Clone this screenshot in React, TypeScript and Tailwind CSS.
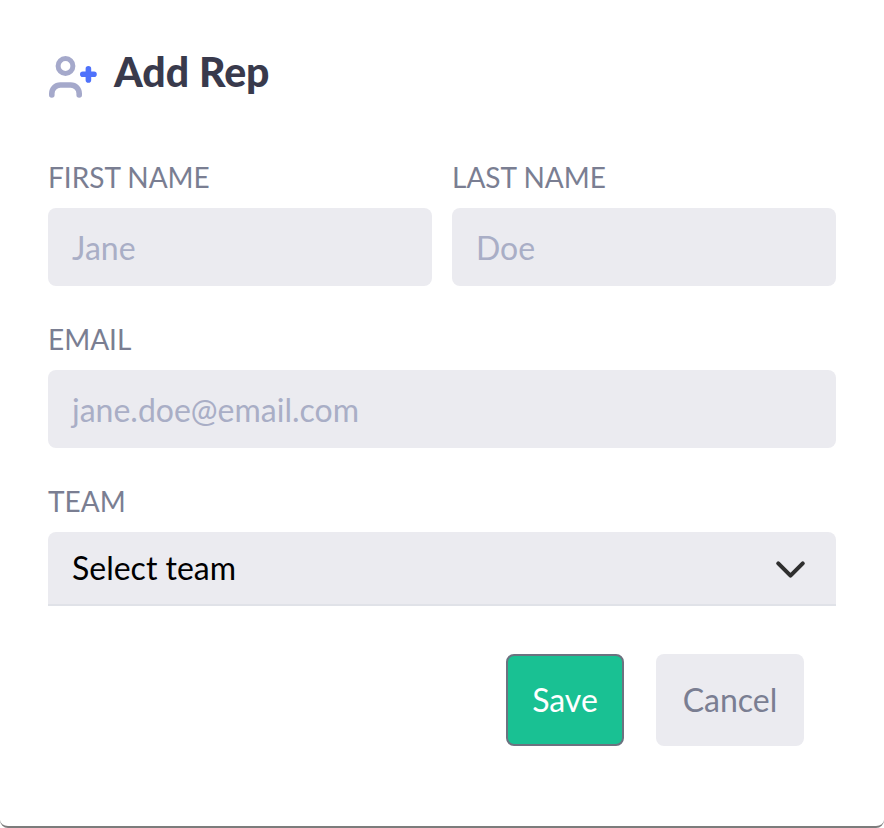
import { ChevronDown } from "lucide-react";

function Field({ label, placeholder, wide }: { label: string; placeholder: string; wide?: boolean }) {
  return (
    <div className={wide ? "mt-[34px]" : "flex-1"}>
      <div className="mb-2.5 h-[40px] text-[28px] leading-[39px] text-[#7a7e92]">{label}</div>
      <div className="flex h-[78px] items-center rounded-lg bg-[#ebebf0] px-6 pt-[2px] text-[32px] text-[#a9aec6]">
        {placeholder}
      </div>
    </div>
  );
}

function AddUserIcon() {
  return (
    <svg width="50" height="44" viewBox="0 0 50 44" fill="none" strokeLinecap="round" className="mt-[7px]">
      <circle cx="17.5" cy="10" r="7.4" stroke="#a5a9cb" strokeWidth="5" />
      <path d="M3.8 39v-1.5a8.5 8.5 0 0 1 8.5-8.5h10.4a8.5 8.5 0 0 1 8.5 8.5V39" stroke="#a5a9cb" strokeWidth="5.6" />
      <path d="M34.8 18.3h11.2M40.4 12.7v11.2" stroke="#4f72fb" strokeWidth="5.6" />
    </svg>
  );
}

export default function App() {
  return (
    <div className="h-[828px] w-[884px] overflow-hidden rounded-b-lg border-b-2 border-[#7c7c7c] bg-white px-12 font-['Lato',sans-serif]">
      <div className="flex h-[158px] items-start pt-[49px]">
        <AddUserIcon />
        <h1 className="ml-4 text-[41px] leading-[46px] font-black text-[#393a4c]">Add Rep</h1>
      </div>

      <div className="flex gap-5">
        <Field label="FIRST NAME" placeholder="Jane" />
        <Field label="LAST NAME" placeholder="Doe" />
      </div>
      <Field wide label="EMAIL" placeholder="jane.doe@email.com" />

      <div className="mt-[34px]">
        <div className="mb-2.5 h-[40px] text-[28px] leading-[39px] text-[#7a7e92]">TEAM</div>
        <div className="flex h-[74px] items-center justify-between rounded-t-lg border-b-2 border-[#e0e2e8] bg-[#ebebf0] pr-[21px] pl-6 text-[32px] text-black">
          Select team
          <ChevronDown size={49} strokeWidth={2} className="mt-[3px] text-[#2f2f2f]" />
        </div>
      </div>

      <div className="mt-12 flex justify-end gap-8 pr-8 text-[32px]">
        <button className="h-[92px] w-[118px] rounded-lg border-2 border-[#6c7280] bg-[#19c193] text-white">
          Save
        </button>
        <button className="h-[92px] w-[148px] rounded-lg bg-[#ebebf0] text-[#7a7e92]">Cancel</button>
      </div>
    </div>
  );
}
